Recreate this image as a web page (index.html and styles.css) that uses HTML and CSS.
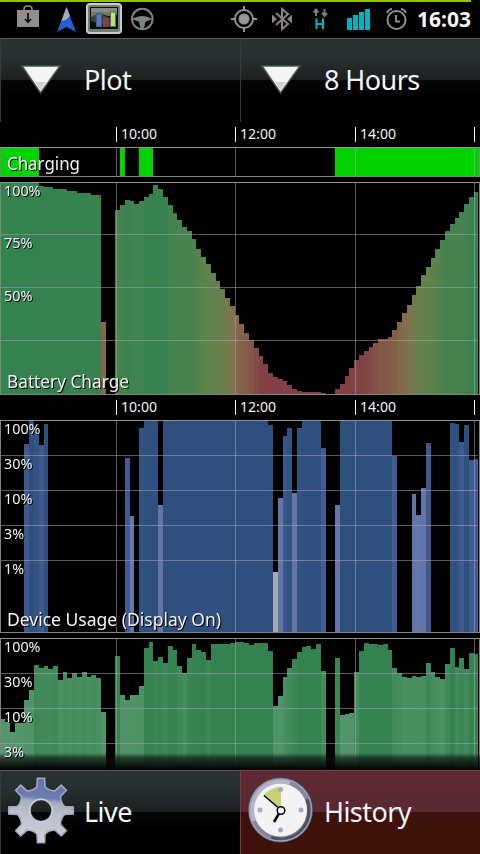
FILE: index.html
```html
<!DOCTYPE html>
<html>
<head>
  <meta charset="utf-8">
  <title>Battery History</title>
  <link rel="stylesheet" href="styles.css">
</head>
<body>
  <div class="screen">
    <div class="status-bar">
      <svg width="480" height="38" viewBox="0 0 480 38">
        <rect width="471" height="2" fill="#8fc400"/>
        <!-- market bag -->
        <path d="M17 10h22v17H17z" fill="#918d8b"/>
        <path d="M24 11V9q0-3 4-3t4 3v2" fill="none" stroke="#918d8b" stroke-width="1.5"/>
        <path d="M28 13v9M25 19l3 3 3-3" fill="none" stroke="#000" stroke-width="1.6"/>
        <!-- navigation arrow -->
        <path d="M66.500 7L57 32l9.500-5 9.500 5z" fill="#2460cf"/>
        <path d="M66.500 7L61.500 21l4-1 4.500-4z" fill="#a9abbb"/>
        <!-- battery app -->
        <rect x="87" y="4" width="34" height="29" rx="3" fill="#737d77" stroke="#c9cacd" stroke-width="2"/>
        <rect x="90" y="7" width="28" height="22" fill="#080f0b"/>
        <path d="M91 8h26v4H91z" fill="#858c88"/>
        <path d="M91 12h26v3l-9 1-7-2-10 4z" fill="#7c7658"/>
        <path d="M91 17l8-4 9 4 4 2v8l-12-3-9-3z" fill="#314936"/>
        <rect x="96.500" y="14" width="5" height="12.500" fill="#6275ae" stroke="#2c5fb8" stroke-width="1"/>
        <rect x="103" y="18" width="6" height="9" fill="#873f43"/>
        <rect x="110.500" y="12" width="5" height="14.500" fill="#c8d979" stroke="#348250" stroke-width="1"/>
        <!-- steering wheel -->
        <g fill="none" stroke="#7c8581">
          <circle cx="142.300" cy="19" r="10.300" stroke-width="2"/>
          <path d="M133 19q9.500-5 18.500 0l-6.500 2.500-1.500 7h-2.500l-1.500-7z" fill="#7c8581" stroke-width="1"/>
        </g>
        <!-- gps -->
        <g stroke="#96928f" fill="none" stroke-width="2">
          <circle cx="244" cy="19" r="9"/>
          <circle cx="244" cy="19" r="4.500" fill="#9a9692"/>
          <path d="M244 6v5M244 27v5M231 19h5M252 19h5"/>
        </g>
        <!-- bluetooth -->
        <path d="M276 13l12 11-6 5V9l6 5-12 11" fill="none" stroke="#87827f" stroke-width="2"/>
        <path d="M272 14.500l5 4.500-5 4.500zM292 14.500l-5 4.500 5 4.500z" fill="#87827f"/>
        <!-- data -->
        <path d="M313.500 12.500l2.500-3 2.500 3M316 10v6M322 13l2.500 3 2.500-3M324.500 9v6" fill="none" stroke="#758079" stroke-width="2"/>
        <path d="M316.500 18.500v10.500M323 18.500v10.500M316 24h7" fill="none" stroke="#00b8c4" stroke-width="2"/>
        <!-- signal -->
        <path d="M347 18h5v12h-5zM353 15h5v15h-5zM359 12h5v18h-5zM365 9h5v21h-5z" fill="#00b3bf"/>
        <!-- alarm -->
        <g fill="none" stroke="#918d8b" stroke-width="2">
          <circle cx="396.500" cy="20" r="9"/>
          <path d="M387 13q2-4 5-4M406 13q-2-4-5-4M396 15v6.500h4"/>
        </g>
      </svg>
      <span class="clock">16:03</span>
    </div>

    <div class="button-row">
      <div class="button">
        <svg class="button-icon" width="76" height="84">
          <path d="M22 28h38L40.500 55z" fill="#f4f4f4" stroke="#43564b" stroke-width="1.500"/>
          <path d="M35 44h11l-5.500 8z" fill="#cfcfd8"/>
        </svg>
        <span>Plot</span>
      </div>
      <div class="button">
        <svg class="button-icon" width="76" height="84">
          <path d="M22 28h38L40.500 55z" fill="#f4f4f4" stroke="#43564b" stroke-width="1.500"/>
          <path d="M35 44h11l-5.500 8z" fill="#cfcfd8"/>
        </svg>
        <span>8 Hours</span>
      </div>
    </div>

    <div class="axis"></div>
    <svg class="chart charging" id="charging" width="480" height="30"></svg>
    <svg class="chart battery" id="battery" width="480" height="213"></svg>
    <div class="axis"></div>
    <svg class="chart usage" id="usage" width="480" height="213"></svg>
    <svg class="chart cpu" id="cpu" width="480" height="132"></svg>

    <div class="button-row">
      <div class="button">
        <svg class="button-icon" width="76" height="84">
          <defs>
            <linearGradient id="steel" x1=".55" y1="0" x2=".45" y2="1">
              <stop offset="0" stop-color="#5f73b0"/>
              <stop offset=".3" stop-color="#6b7db3"/>
              <stop offset=".36" stop-color="#a9adc0"/>
              <stop offset=".55" stop-color="#bcbfcc"/>
              <stop offset="1" stop-color="#d0d0da"/>
            </linearGradient>
          </defs>
          <path id="gear" fill="url(#steel)" fill-rule="evenodd" stroke="#a4aabc" stroke-width="1.500"/>
          <circle cx="41" cy="40.500" r="11.500" fill="none" stroke="#d8dbe0" stroke-width="1"/>
        </svg>
        <span>Live</span>
      </div>
      <div class="button active">
        <svg class="button-icon" width="76" height="84">
          <circle cx="40.500" cy="40" r="32" fill="#8188a0" stroke="#4a554f" stroke-width="1"/>
          <path d="M14 51A29 29 0 0 1 50 13" fill="none" stroke="#b2b6c8" stroke-width="4"/>
          <path d="M67 29A29 29 0 0 1 31 68" fill="none" stroke="#50545a" stroke-width="4"/>
          <circle cx="40.500" cy="40" r="31" fill="none" stroke="#98a0ba" stroke-width="1.500"/>
          <circle cx="40.500" cy="40" r="26.500" fill="#f3f3f4"/>
          <path d="M41 40L24 25q7-8 17-8z" fill="#c9d177"/>
          <g fill="#a6a9ba">
            <circle cx="40.500" cy="19.500" r="2.500"/>
            <circle cx="61" cy="40" r="2.500"/>
            <circle cx="40.500" cy="60" r="2.500"/>
            <circle cx="20" cy="40" r="2.500"/>
          </g>
          <path d="M41 40L24 25.500" stroke="#000" stroke-width="1.500"/>
          <path d="M41 40l-7 12" stroke="#000" stroke-width="2.500"/>
          <circle cx="41" cy="40.500" r="3.800" fill="#fff" stroke="#000" stroke-width="1.500"/>
        </svg>
        <span>History</span>
      </div>
    </div>
  </div>
  <script src="charts.js"></script>
</body>
</html>
```

FILE: styles.css
```css
body {
  margin: 0;
  background: #000;
  color: #f4f4f6;
  font-family: "Noto Sans", "Open Sans", sans-serif;
}

.screen {
  width: 480px;
  height: 854px;
  overflow: hidden;
  display: flex;
  flex-direction: column;
}

.screen svg {
  display: block;
  flex: none;
}

.status-bar {
  position: relative;
  height: 38px;
  flex: none;
}

.clock {
  position: absolute;
  right: 9px;
  top: 5px;
  font-size: 21px;
  line-height: 28px;
  font-weight: bold;
}

.button-row {
  display: flex;
  height: 84px;
  flex: none;
}

.button {
  width: 240px;
  height: 84px;
  box-sizing: border-box;
  display: flex;
  border-left: 1px solid #343b39;
  border-top: 1px solid #55595a;
  background: linear-gradient(#2c3233 0, #292f30 17px, #1c2020 41px, #050606 41px, #000 60px);
}

.button.active {
  border-color: #7a3a40;
  background: linear-gradient(#5e2a36 0, #5a2833 41px, #3e120c 41px, #40110b 100%);
}

.button-icon {
  margin: -1px 0 0 -1px;
}

.button span {
  margin-left: 8px;
  font-size: 27px;
  line-height: 82px;
  letter-spacing: -0.55px;
}

.axis {
  height: 25px;
  flex: none;
}

.battery {
  margin-top: 5px;
}

.cpu {
  margin-top: 5px;
}

.bars {
  shape-rendering: crispEdges;
}

.tick {
  font-size: 14px;
  fill: #f4f4f6;
}

.label {
  font-size: 14px;
}

.title {
  font-size: 18px;
}

.label,
.title {
  fill: #f4f4f6;
  filter: drop-shadow(1px 1px 0 #000);
}
```

FILE: charts.js
```js
const hours = [[116, '10:00'], [235, '12:00'], [355, '14:00'], [474, '']];

// distance of every bar's top from the top of the chart, -1 = no data
const battery = [
  1, 1, 1, 1, 1, 1, 1, 1, 4, 5, 5, 7, 7, 7, 9, 9, 11, 11, 11, 13,
  13, 140, -1, -1, 28, 23, 18, 19, 22, 19, 15, 12, 3, 7, 15, 23, 31, 38, 45, 49,
  57, 67, 75, 82, 91, 99, 107, 116, 124, 133, 142, 151, 158, 166, 174, 182, 191, 195, 197, 199,
  203, 207, 209, 210, 210, 210, 210, 211, -1, -1, 207, 202, 194, 186, 178, 173, 169, 165, 161, 157,
  157, 155, 148, 140, 131, 123, 113, 104, 93, 85, 76, 67, 58, 49, 42, 36, 30, 22, 15, 10
];

const usage = [
  -1, -1, -1, -1, -1, 24, 0, 12, 25, 4, -1, -1, -1, -1, -1, -1, -1, -1, -1, -1,
  -1, -1, -1, -1, -1, -1, 38, 96, -1, 8, 0, 0, 0, 85, 0, 0, 0, 0, 0, 0,
  0, 0, 0, 0, 0, 0, 0, 0, 0, 0, 0, 0, 0, 0, 0, 0, 5, 152, 78, 16,
  8, 73, 8, 0, 0, 0, 0, 28, -1, -1, 85, 0, 0, 0, 0, 0, 0, 0, 0, 0,
  0, 0, 36, -1, -1, -1, 74, 95, 68, 23, -1, -1, -1, -1, 3, 4, 22, 5, 40, 39
];

const cpu = [
  81, 84, 94, 85, 85, 62, 52, 27, 30, 28, 31, 28, 42, 34, 40, 35, 39, 34, 39, 37,
  40, 74, -1, -1, 18, 57, 62, 57, 57, 48, 10, 4, 23, 19, 25, 8, 12, 28, 35, 20,
  6, 12, 14, 22, 6, 6, 6, 6, 5, 4, 4, 5, 7, 5, 5, 5, 13, 68, 58, 39,
  30, 21, 14, 9, 8, 11, 6, 33, -1, -1, 20, 77, 76, 75, 34, 13, 5, 6, 6, 7,
  6, 12, 30, 35, 39, 40, 38, 39, 38, 25, 34, 39, 41, 26, 10, 29, 20, 31, 15, 16
];

const batteryColors = [[0, [52, 130, 80]], [12, [54, 130, 80]], [25, [68, 131, 80]], [50, [70, 131, 78]],
  [78, [94, 131, 76]], [106, [105, 126, 76]], [125, [130, 115, 77]], [155, [130, 90, 70]], [174, [130, 64, 68]], [213, [130, 64, 68]]];
const usageColors = [[0, [47, 80, 127]], [6, [48, 81, 128]], [28, [66, 91, 146]], [40, [66, 91, 146]],
  [68, [98, 117, 166]], [100, [102, 119, 170]], [152, [165, 168, 181]], [213, [165, 168, 181]]];
const cpuColors = [[0, [52, 130, 80]], [14, [52, 130, 80]], [28, [64, 138, 90]], [48, [78, 147, 102]],
  [70, [81, 148, 105]], [94, [88, 150, 110]], [132, [88, 150, 110]]];

function colorAt(stops, v) {
  let i = 1;
  while (i < stops.length - 1 && v > stops[i][0]) i++;
  const [a, ca] = stops[i - 1];
  const [b, cb] = stops[i];
  const t = (v - a) / (b - a);
  return 'rgb(' + ca.map((c, n) => Math.round(c + (cb[n] - c) * t)).join() + ')';
}

function barX(i) {
  return Math.round(4.78 * i + 0.48);
}

function rect(x, y, w, h, fill) {
  return `<rect x="${x}" y="${y}" width="${w}" height="${h}" fill="${fill}"/>`;
}

function bars(data, stops, height) {
  return data.map((v, i) => v < 0 ? '' :
    rect(barX(i), v, barX(i + 1) - barX(i), height - v, colorAt(stops, v))).join('');
}

function grid(lines, height, closed) {
  const frame = '#7d8581';
  let out = lines.map(y => rect(1, y, 477, 1, 'rgba(165,160,175,.55)')).join('');
  out += hours.map(h => rect(h[0], 1, 1, height - 2, 'rgba(165,160,175,.55)')).join('');
  out += rect(0, 0, 480, 1, '#8e9290') + rect(0, 0, 1, height, frame) + rect(479, 0, 1, height, frame);
  if (closed) out += rect(0, height - 1, 480, 1, frame);
  return out;
}

function text(cls, x, y, width, str) {
  return `<text class="${cls}" x="${x}" y="${y}" textLength="${width}" lengthAdjust="spacingAndGlyphs">${str}</text>`;
}

function labels(rows) {
  return rows.map(([y, str]) => text('label', 4, y, { 2: 20, 3: 28.5, 4: 36.5 }[str.length], str)).join('');
}

function draw(id, shapes, texts) {
  document.getElementById(id).innerHTML = `<g class="bars">${shapes}</g>${texts}`;
}

document.querySelectorAll('.axis').forEach(axis => {
  axis.innerHTML = '<svg width="480" height="25">' + hours.map(([x, str]) =>
    rect(x, 5, 1, 15, '#f4f4f6') + (str ? text('tick', x + 5, 17, 36, str) : '')).join('') + '</svg>';
});

draw('charging',
  [[1, 38], [120, 5], [139, 14], [335, 144]].map(([x, w]) => rect(x, 1, w, 28, '#00d300')).join('') + grid([], 30, true),
  text('title', 7, 23, 73, 'Charging'));

draw('battery', bars(battery, batteryColors, 212) + grid([52, 105, 158], 213, true),
  labels([[14, '100%'], [66, '75%'], [119, '50%']]) + text('title', 7, 206, 122, 'Battery Charge'));

draw('usage', bars(usage, usageColors, 212) + grid([35, 70, 105, 140], 213, true),
  labels([[14, '100%'], [49, '30%'], [84, '10%'], [119, '3%'], [154, '1%']]) +
  text('title', 7, 206, 214, 'Device Usage (Display On)'));

const fade = '<defs><linearGradient id="fade" x1="0" y1="0" x2="0" y2="1">' +
  '<stop offset="0" stop-color="#000" stop-opacity="0"/><stop offset=".3" stop-color="#0b100d" stop-opacity=".65"/>' +
  '<stop offset="1" stop-color="#000"/></linearGradient></defs>';
draw('cpu', bars(cpu, cpuColors, 132) + grid([35, 70, 105], 132, false) + fade + rect(0, 115, 480, 17, 'url(#fade)'),
  labels([[14, '100%'], [49, '30%'], [84, '10%'], [119, '3%']]));

// gear outline: eight teeth round a hole
let gear = '';
for (let i = 0; i < 8; i++) {
  [[-0.3, 22.5], [-0.17, 24], [-0.11, 32.5], [0.11, 32.5], [0.17, 24], [0.3, 22.5]].forEach(([da, r]) => {
    const a = i * Math.PI / 4 + da;
    gear += (gear ? 'L' : 'M') + (41 + r * Math.sin(a)).toFixed(1) + ' ' + (40.5 - r * Math.cos(a)).toFixed(1);
  });
}
document.getElementById('gear').setAttribute('d', gear + 'ZM30 40.5a11 11 0 1 0 22 0a11 11 0 1 0-22 0Z');
```
